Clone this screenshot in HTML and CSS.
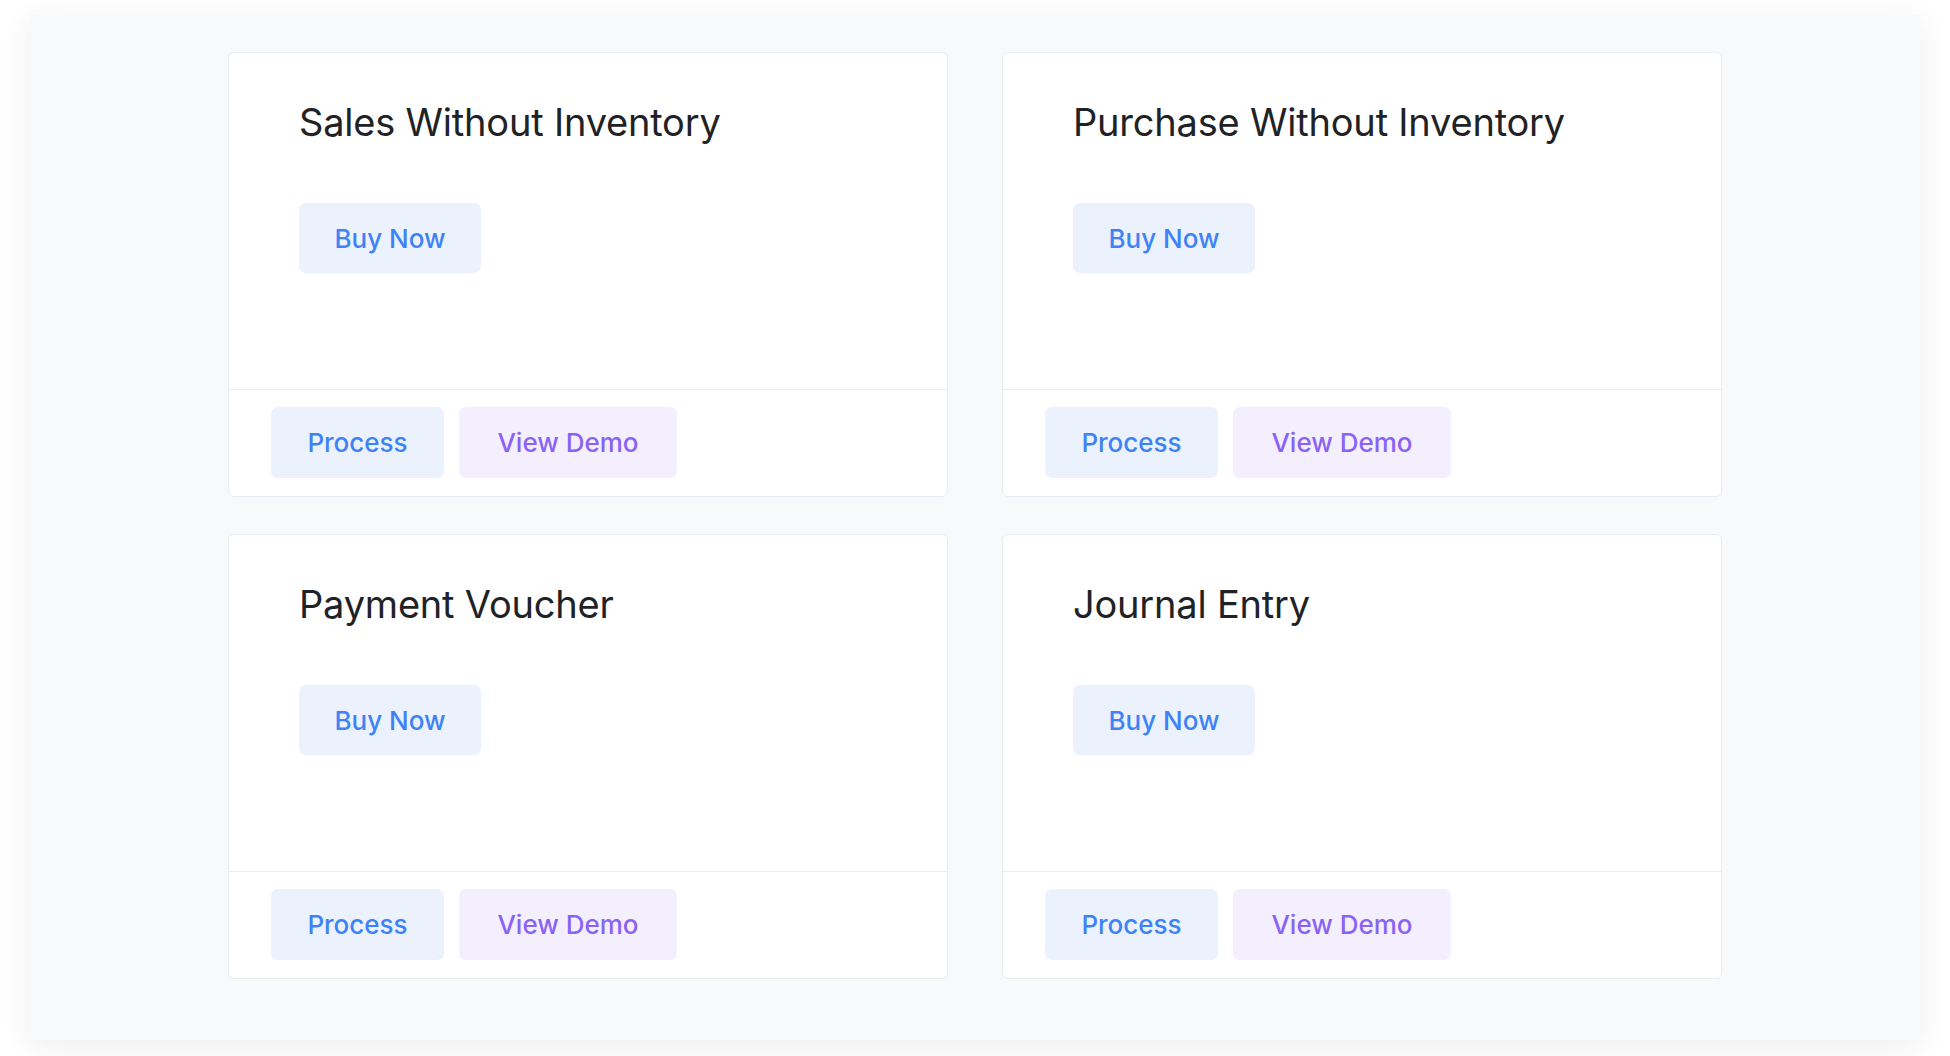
FILE: index.html
```html
<!DOCTYPE html>
<html lang="en">
<head>
<meta charset="utf-8">
<title>Vouchers</title>
<link rel="stylesheet" href="styles.css">
</head>
<body>
<div class="panel">
  <div class="grid">
    <div class="card">
      <div class="card-body">
        <h2 class="card-title">Sales Without Inventory</h2>
        <a class="btn btn-blue btn-buy">Buy Now</a>
      </div>
      <div class="card-footer">
        <a class="btn btn-blue btn-process">Process</a>
        <a class="btn btn-purple btn-demo">View Demo</a>
      </div>
    </div>
    <div class="card">
      <div class="card-body">
        <h2 class="card-title">Purchase Without Inventory</h2>
        <a class="btn btn-blue btn-buy">Buy Now</a>
      </div>
      <div class="card-footer">
        <a class="btn btn-blue btn-process">Process</a>
        <a class="btn btn-purple btn-demo">View Demo</a>
      </div>
    </div>
    <div class="card">
      <div class="card-body">
        <h2 class="card-title">Payment Voucher</h2>
        <a class="btn btn-blue btn-buy">Buy Now</a>
      </div>
      <div class="card-footer">
        <a class="btn btn-blue btn-process">Process</a>
        <a class="btn btn-purple btn-demo">View Demo</a>
      </div>
    </div>
    <div class="card">
      <div class="card-body">
        <h2 class="card-title">Journal Entry</h2>
        <a class="btn btn-blue btn-buy">Buy Now</a>
      </div>
      <div class="card-footer">
        <a class="btn btn-blue btn-process">Process</a>
        <a class="btn btn-purple btn-demo">View Demo</a>
      </div>
    </div>
  </div>
</div>
</body>
</html>
```
FILE: styles.css
```css
* { box-sizing: border-box; }
html, body { margin: 0; padding: 0; background: #ffffff; }
body {
  font-family: Inter, "Open Sans", "Liberation Sans", sans-serif;
  color: #212226;
  padding: 15px 30px 16px 30px;
}
.panel {
  background: #f8f9fb;
  height: 1025px;
  box-shadow: 0 6px 30px rgba(0, 0, 0, 0.07);
  padding-top: 37px;
}
.grid {
  width: 1494px;
  margin: 0 auto;
  display: grid;
  grid-template-columns: 720px 720px;
  column-gap: 54px;
  row-gap: 37px;
}
.card {
  background: #ffffff;
  border: 1px solid #e8ecf3;
  border-radius: 6px;
  height: 445px;
  display: flex;
  flex-direction: column;
}
.card-body {
  height: 336px;
  padding: 46px 70px 0 70px;
}
.card-title {
  margin: 0;
  font-size: 38px;
  line-height: 46px;
  font-weight: 400;
  color: #212226;
  letter-spacing: -0.2px;
}
.btn {
  display: inline-flex;
  align-items: center;
  justify-content: center;
  border-radius: 7px;
  font-weight: 500;
  font-size: 26px;
  height: 70px;
  cursor: pointer;
}
.btn-buy {
  margin-top: 58px;
  width: 182px;
}
.btn-blue {
  background: #ebf2fe;
  color: #3f82f6;
}
.btn-purple {
  background: #f3effe;
  color: #8a63f4;
}
.card-footer {
  flex: 1;
  border-top: 1px solid #e8ecf3;
  padding: 17px 42px 0 42px;
  display: flex;
  gap: 15px;
}
.btn-process { width: 173px; height: 71px; }
.btn-demo { width: 218px; height: 71px; }
```
